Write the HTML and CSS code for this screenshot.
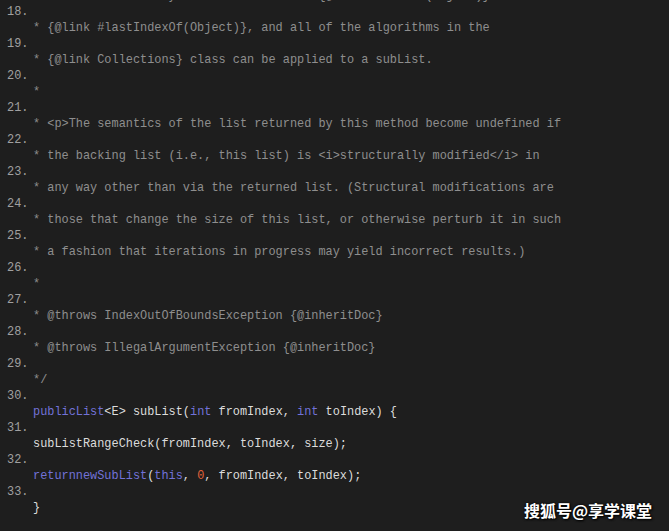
FILE: index.html
```html
<!DOCTYPE html>
<html>
<head>
<meta charset="utf-8">
<link rel="stylesheet" href="styles.css">
</head>
<body>
<div class="code">
  <div class="ln c">* Similar idioms may be constructed for {@link #indexOf(Object)} and</div>
  <div class="num">18.</div>
  <div class="ln c">* {@link #lastIndexOf(Object)}, and all of the algorithms in the</div>
  <div class="num">19.</div>
  <div class="ln c">* {@link Collections} class can be applied to a subList.</div>
  <div class="num">20.</div>
  <div class="ln c">*</div>
  <div class="num">21.</div>
  <div class="ln c">* &lt;p&gt;The semantics of the list returned by this method become undefined if</div>
  <div class="num">22.</div>
  <div class="ln c">* the backing list (i.e., this list) is &lt;i&gt;structurally modified&lt;/i&gt; in</div>
  <div class="num">23.</div>
  <div class="ln c">* any way other than via the returned list. (Structural modifications are</div>
  <div class="num">24.</div>
  <div class="ln c">* those that change the size of this list, or otherwise perturb it in such</div>
  <div class="num">25.</div>
  <div class="ln c">* a fashion that iterations in progress may yield incorrect results.)</div>
  <div class="num">26.</div>
  <div class="ln c">*</div>
  <div class="num">27.</div>
  <div class="ln c">* @throws IndexOutOfBoundsException {@inheritDoc}</div>
  <div class="num">28.</div>
  <div class="ln c">* @throws IllegalArgumentException {@inheritDoc}</div>
  <div class="num">29.</div>
  <div class="ln c">*/</div>
  <div class="num">30.</div>
  <div class="ln"><span class="kw">publicList</span>&lt;E&gt; subList(<span class="kw">int</span> fromIndex, <span class="kw">int</span> toIndex) {</div>
  <div class="num">31.</div>
  <div class="ln">subListRangeCheck(fromIndex, toIndex, size);</div>
  <div class="num">32.</div>
  <div class="ln"><span class="kw">returnnewSubList</span>(<span class="kw">this</span>, <span class="lit">0</span>, fromIndex, toIndex);</div>
  <div class="num">33.</div>
  <div class="ln">}</div>
</div>
<div class="mark">搜狐号@享学课堂</div>
</body>
</html>
```
FILE: styles.css
```css
html, body {
  margin: 0;
  padding: 0;
  background: #1e1e1e;
  width: 669px;
  height: 531px;
  overflow: hidden;
}
body {
  position: relative;
}
.code {
  margin-top: -12px;
  font-family: "Liberation Mono", "DejaVu Sans Mono", monospace;
  font-size: 11.9px;
  line-height: 16px;
  color: #dcdcdc;
}
.num, .ln {
  white-space: pre;
  height: 16px;
}
.num {
  padding-left: 7px;
  color: #a0a0a0;
}
.ln {
  padding-left: 33px;
}
.ln.c {
  color: #8e8e8e;
}
.kw {
  color: #7272d8;
}
.lit {
  color: #e0623a;
}
.mark {
  position: absolute;
  right: 17px;
  bottom: 9px;
  font-family: "Noto Sans CJK SC", sans-serif;
  font-size: 16px;
  font-weight: 700;
  color: #ffffff;
  text-shadow: 1px 1px 2px #000, 0 0 3px #000;
}
```
